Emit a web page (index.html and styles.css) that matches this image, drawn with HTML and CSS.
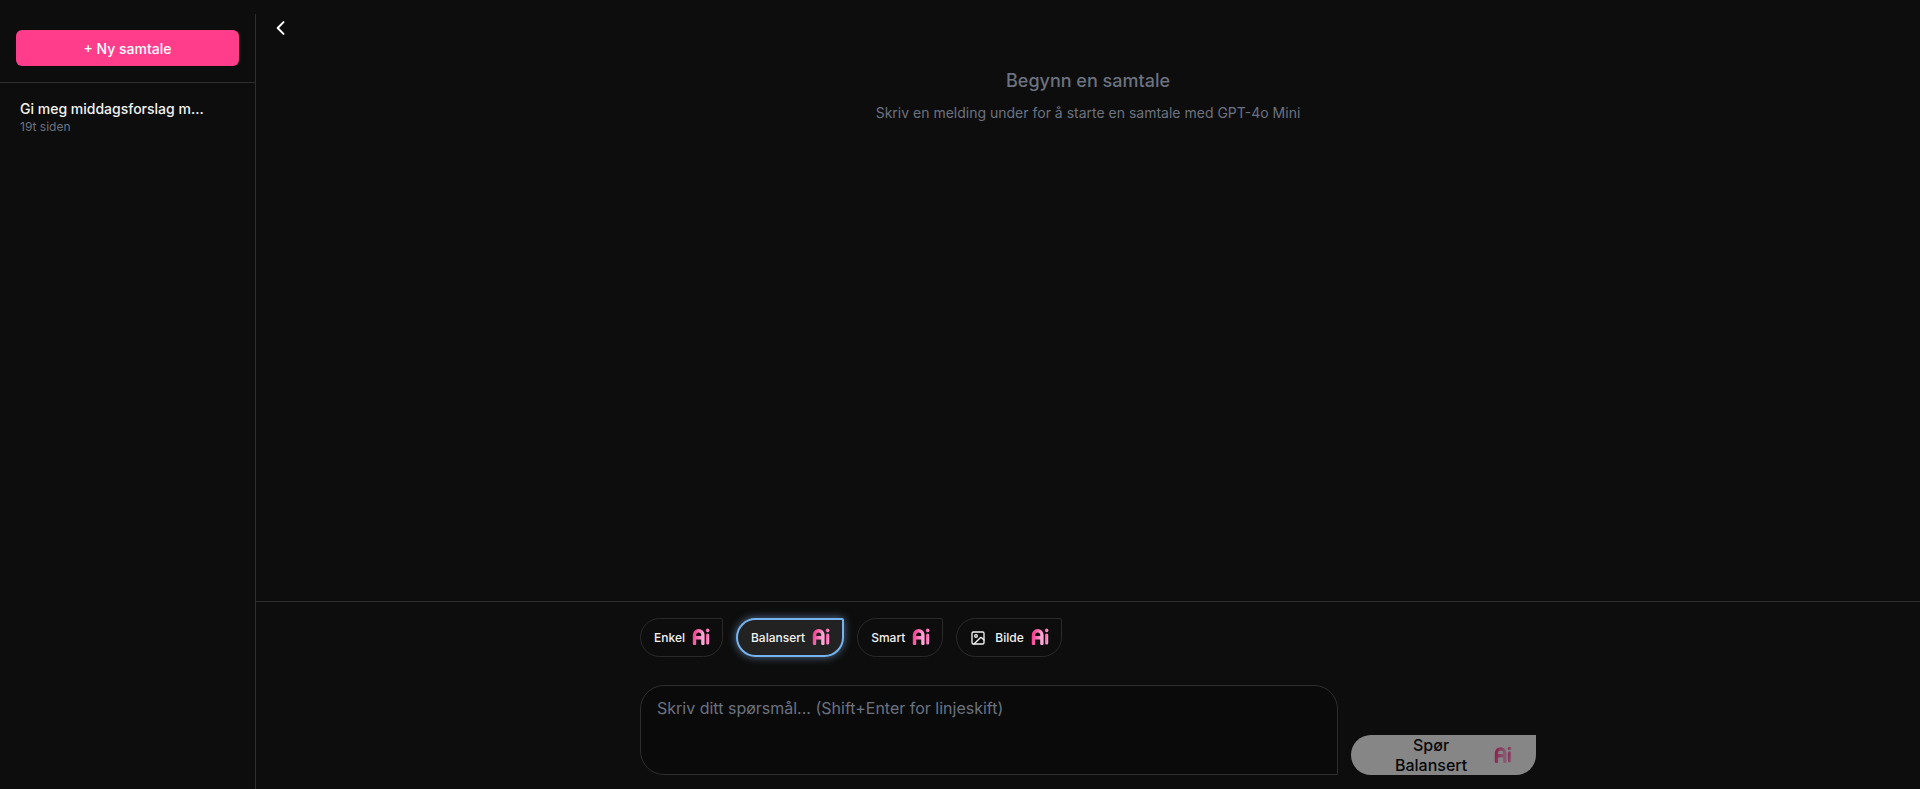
FILE: index.html
```html
<!DOCTYPE html>
<html lang="en">
<head>
    <meta charset="UTF-8">
    <title>Samtale</title>
    <link rel="stylesheet" href="styles.css">
</head>
<body>

    <svg class="defs" width="0" height="0">
        <defs>
            <linearGradient id="aiFill" x1="0" y1="0" x2="1" y2="0.3">
                <stop offset="0" stop-color="#ff3d8f"/>
                <stop offset="1" stop-color="#ffa6d6"/>
            </linearGradient>
            <symbol id="aiLogo" viewBox="0 0 18 17">
                <path d="M2.5 15.5V7a4.2 4.2 0 0 1 8.4 0v8.5M2.5 9.8h8.4" fill="none" stroke="url(#aiFill)" stroke-width="3.4" stroke-linecap="round"/>
                <rect x="14" y="5.5" width="3.2" height="11" rx="1.5" fill="url(#aiFill)"/>
                <circle cx="15.6" cy="2.4" r="1.8" fill="url(#aiFill)"/>
            </symbol>
        </defs>
    </svg>

    <div class="app">
        <!-- Sidebar -->
        <aside class="sidebar">
            <div class="sidebar-top">
                <button class="new-chat">+ Ny samtale</button>
            </div>
            <div class="chat-list">
                <div class="chat-item">
                    <div class="chat-title">Gi meg middagsforslag m...</div>
                    <div class="chat-time">19t siden</div>
                </div>
            </div>
        </aside>

        <!-- Main -->
        <main class="main">
            <div class="messages">
                <button class="collapse" aria-label="Skjul">
                    <svg width="20" height="20" viewBox="0 0 24 24" fill="none" stroke="currentColor" stroke-width="2.4" stroke-linecap="round" stroke-linejoin="round"><path d="M15 5l-7 7 7 7"/></svg>
                </button>
                <h2 class="empty-title">Begynn en samtale</h2>
                <p class="empty-text">Skriv en melding under for å starte en samtale med GPT-4o Mini</p>
            </div>

            <div class="composer">
                <div class="composer-inner">
                    <div class="models">
                        <button class="model">Enkel <svg class="ai"><use href="#aiLogo"/></svg></button>
                        <button class="model active">Balansert <svg class="ai"><use href="#aiLogo"/></svg></button>
                        <button class="model">Smart <svg class="ai"><use href="#aiLogo"/></svg></button>
                        <button class="model">
                            <svg class="pic" width="16" height="16" viewBox="0 0 24 24" fill="none" stroke="currentColor" stroke-width="2" stroke-linecap="round" stroke-linejoin="round"><rect x="3" y="3" width="18" height="18" rx="2"/><circle cx="9" cy="9" r="2"/><path d="M21 15l-3.1-3.1a2 2 0 0 0-2.8 0L6 21"/></svg>
                            Bilde <svg class="ai"><use href="#aiLogo"/></svg>
                        </button>
                    </div>
                    <div class="input-row">
                        <textarea class="input" placeholder="Skriv ditt spørsmål... (Shift+Enter for linjeskift)"></textarea>
                        <button class="send">Spør Balansert <svg class="ai"><use href="#aiLogo"/></svg></button>
                    </div>
                </div>
            </div>
        </main>
    </div>

</body>
</html>
```

FILE: styles.css
```css
* {
    box-sizing: border-box;
}

body {
    margin: 0;
    height: 789px;
    overflow: hidden;
    background: #0d0d0d;
    color: white;
    font-family: Inter, "Liberation Sans", sans-serif;
}

button {
    font-family: inherit;
    cursor: pointer;
}

.defs {
    position: absolute;
}

.app {
    display: flex;
    height: 100%;
    padding-top: 14px;
}

/* Sidebar */
.sidebar {
    width: 256px;
    flex-shrink: 0;
    border-right: 1px solid #2e2e2e;
}

.sidebar-top {
    padding: 16px;
    border-bottom: 1px solid #2e2e2e;
}

.new-chat {
    display: block;
    width: 100%;
    height: 36px;
    border: none;
    border-radius: 6px;
    background: #ff3d8b;
    color: white;
    font-size: 14px;
    font-weight: 500;
}

.chat-list {
    padding: 16px 20px;
}

.chat-title {
    font-size: 14px;
    line-height: 20px;
    font-weight: 500;
    color: #f3f3f3;
}

.chat-time {
    font-size: 12px;
    line-height: 16px;
    color: #6b7280;
}

/* Main */
.main {
    flex: 1;
    display: flex;
    flex-direction: column;
    min-width: 0;
}

.messages {
    position: relative;
    flex: 1;
    padding-top: 53px;
    text-align: center;
}

.collapse {
    position: absolute;
    left: 15px;
    top: 4px;
    display: flex;
    padding: 0;
    border: none;
    background: none;
    color: white;
}

.empty-title {
    margin: 0;
    font-size: 18px;
    line-height: 28px;
    font-weight: 500;
    color: #6b7280;
}

.empty-text {
    margin: 8px 0 0;
    font-size: 14px;
    line-height: 20px;
    color: #6b7280;
}

/* Composer */
.composer {
    height: 188px;
    border-top: 1px solid #2e2e2e;
    padding: 16px 0 15px 384px;
}

.composer-inner {
    width: 896px;
}

.models {
    display: flex;
    gap: 13px;
}

.model {
    display: flex;
    align-items: center;
    gap: 7px;
    height: 39px;
    padding: 0 12px 0 13px;
    border: 1px solid #2a2a2a;
    border-radius: 20px 2px 20px 20px;
    background: transparent;
    color: #f3f3f3;
    font-size: 12px;
    font-weight: 500;
}

.model.active {
    border: 2px solid #75b4f0;
    background: #222;
    box-shadow: 0 0 8px rgba(147, 197, 253, 0.55);
}

.ai {
    width: 18px;
    height: 17px;
    margin-bottom: 2px;
}

.pic {
    margin-right: 2px;
}

.input-row {
    display: flex;
    align-items: flex-end;
    gap: 13px;
    margin-top: 28px;
}

.input {
    display: block;
    width: 701px;
    height: 90px;
    padding: 10px 16px;
    border: 1px solid #2e2e2e;
    border-radius: 24px 24px 0 24px;
    background: #0a0a0a;
    color: white;
    font-family: inherit;
    font-size: 16px;
    line-height: 24px;
    resize: none;
    outline: none;
}

.input::placeholder {
    color: #6b7280;
}

.send {
    display: flex;
    align-items: center;
    gap: 7px;
    height: 40px;
    padding: 0 24px;
    border: none;
    border-radius: 24px 0 24px 24px;
    background: white;
    color: black;
    font-size: 16px;
    font-weight: 500;
    opacity: 0.5;
}
```
